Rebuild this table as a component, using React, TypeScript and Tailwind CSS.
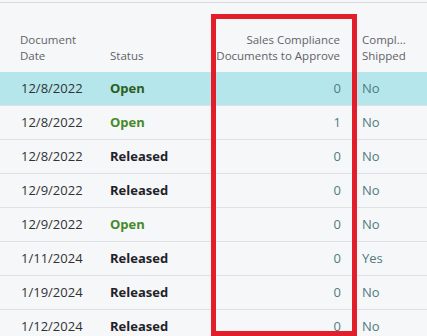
import React from "react";

const rows = [
  { date: "12/8/2022", status: "Open", num: "0", shipped: "No", sel: true },
  { date: "12/8/2022", status: "Open", num: "1", shipped: "No" },
  { date: "12/8/2022", status: "Released", num: "0", shipped: "No" },
  { date: "12/9/2022", status: "Released", num: "0", shipped: "No" },
  { date: "12/9/2022", status: "Open", num: "0", shipped: "No" },
  { date: "1/11/2024", status: "Released", num: "0", shipped: "Yes" },
  { date: "1/19/2024", status: "Released", num: "0", shipped: "No" },
  { date: "1/12/2024", status: "Released", num: "0", shipped: "No" },
];

export default function App() {
  return (
    <div
      className="relative w-[427px] h-[336px] overflow-hidden bg-[#f6f7f9]"
      style={{ fontFamily: '"Open Sans", "Noto Sans", sans-serif' }}
    >
      <div className="h-[2px]" />
      <div className="h-px bg-[#d9dadc]" />
      <div className="flex items-end h-[69px] pb-[8px] text-[11.5px] leading-[16px] text-[#5f6368]">
        <div className="w-[110px] pl-[20px]">
          Document
          <br />
          Date
        </div>
        <div className="w-[105px]">Status</div>
        <div className="w-[125px] text-right whitespace-nowrap">
          Sales Compliance
          <br />
          Documents to Approve
        </div>
        <div className="pl-[22px]">
          Compl...
          <br />
          Shipped
        </div>
      </div>
      {rows.map((r, i) => (
        <div
          key={i}
          className={`flex items-center h-[34px] pt-px text-[13px] border-b border-[#dfe0e2] ${
            r.sel ? "bg-[#b5e6ec]" : ""
          }`}
        >
          <div className="w-[110px] pl-[21px] text-[#323232]">{r.date}</div>
          <div
            className={`w-[105px] font-bold ${
              r.status === "Open"
                ? r.sel
                  ? "text-[#2b5e1a]"
                  : "text-[#468a2a]"
                : "text-[#1f2228]"
            }`}
          >
            {r.status}
          </div>
          <div className="w-[126px] text-right text-[#4f7b80]">{r.num}</div>
          <div className="pl-[21px] text-[#4f7b80]">{r.shipped}</div>
        </div>
      ))}
      <div className="absolute left-[211px] top-[14px] w-[146px] h-[322px] border-[5px] border-[#e31e2b]" />
    </div>
  );
}
